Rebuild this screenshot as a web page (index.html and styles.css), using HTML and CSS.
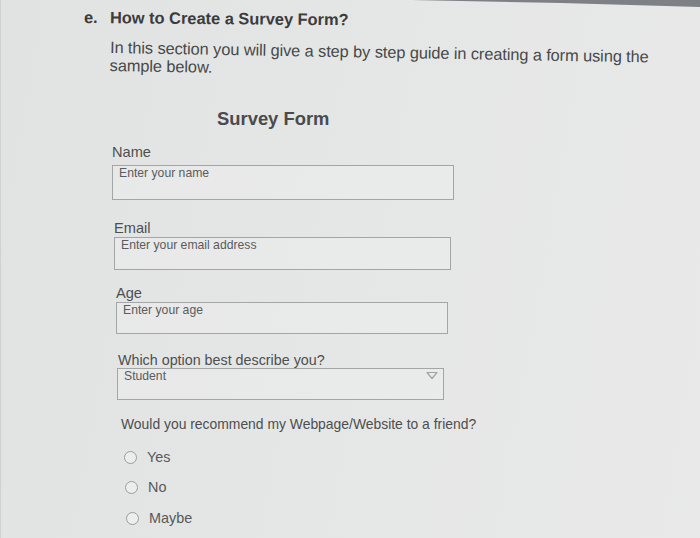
FILE: index.html
```html
<!DOCTYPE html>
<html>
<head>
<meta charset="utf-8">
<link rel="stylesheet" href="styles.css">
</head>
<body>
<div class="page">
  <div class="edge"></div>
  <h1 class="title"><span class="num">e.</span>How to Create a Survey Form?</h1>
  <p class="intro">In this section you will give a step by step guide in creating a form using the sample below.</p>
  <h2 class="form-title">Survey Form</h2>
  <form class="form">
    <div class="field f-name">
      <label class="label">Name</label>
      <div class="input in-name">Enter your name</div>
    </div>
    <div class="field f-email">
      <label class="label">Email</label>
      <div class="input in-email">Enter your email address</div>
    </div>
    <div class="field f-age">
      <label class="label">Age</label>
      <div class="input in-age">Enter your age</div>
    </div>
    <div class="field f-opt">
      <label class="label">Which option best describe you?</label>
      <div class="input select">Student
        <svg class="arrow" width="12" height="9" viewBox="0 0 12 9"><path d="M1 1.5 L11 1.5 L6 7.5 Z" fill="none" stroke="#a0a3a6" stroke-width="1.2" stroke-linejoin="round"/></svg>
      </div>
    </div>
    <div class="question">Would you recommend my Webpage/Website to a friend?</div>
    <div class="radio r-yes"><span class="dot"></span>Yes</div>
    <div class="radio r-no"><span class="dot"></span>No</div>
    <div class="radio r-maybe"><span class="dot"></span>Maybe</div>
  </form>
</div>
</body>
</html>
```
FILE: styles.css
```css
html, body {
  margin: 0;
  padding: 0;
}
body {
  width: 700px;
  height: 538px;
  overflow: hidden;
  background: linear-gradient(100deg, #e1e3e2 0%, #e5e7e6 50%, #e8e9e8 100%);
  font-family: "Liberation Sans", Arial, sans-serif;
}
.page {
  position: relative;
  height: 538px;
  border-left: 1px solid #cfd1d1;
  box-sizing: border-box;
}
.edge {
  position: absolute;
  top: 0;
  left: 0;
  width: 700px;
  height: 8px;
  background: #7d8185;
  clip-path: polygon(410px 0, 700px 0, 700px 7px, 560px 3px);
}
.title {
  margin: 0;
  padding: 8px 0 0 83px;
  font-size: 16.4px;
  line-height: 19px;
  font-weight: bold;
  color: #3b3c3d;
  transform: rotate(0.5deg);
  transform-origin: 83px 50%;
}
.num {
  display: inline-block;
  width: 26px;
}
.intro {
  margin: 11px 0 0 109px;
  width: 545px;
  font-size: 16.4px;
  line-height: 18px;
  color: #47494a;
  letter-spacing: -0.1px;
  transform: rotate(1deg);
  transform-origin: 0 30%;
}
.form-title {
  margin: 35px 0 0 216px;
  font-size: 18.4px;
  line-height: 20px;
  font-weight: bold;
  color: #4a4b4c;
}
.form {
  display: flex;
  flex-direction: column;
}
.field {
  display: flex;
  flex-direction: column;
}
.label {
  font-size: 14.6px;
  line-height: 16px;
  color: #4d4f50;
}
.input {
  box-sizing: border-box;
  border: 1.5px solid #a3a6a7;
  font-size: 12.2px;
  line-height: 14px;
  color: #5a5c5d;
  padding: 0 0 0 6px;
  background: rgba(240, 241, 241, 0.35);
}
.f-name { margin: 15px 0 0 111px; }
.f-name .label { margin-bottom: 5px; }
.in-name { width: 342px; height: 35px; }
.f-email { margin: 20px 0 0 113px; }
.f-email .label { margin-bottom: 1px; }
.in-email { width: 337px; height: 33px; }
.f-age { margin: 16px 0 0 115px; }
.f-age .label { margin-bottom: 1px; line-height: 15px; }
.in-age { width: 332px; height: 32px; }
.f-opt { margin: 18px 0 0 117px; }
.f-opt .label { margin-bottom: 0; font-size: 14.3px; }
.select {
  position: relative;
  width: 327px;
  height: 32px;
  margin-left: -1px;
}
.arrow {
  position: absolute;
  right: 5px;
  top: 2px;
}
.question {
  margin: 16px 0 0 120px;
  font-size: 13.9px;
  line-height: 16px;
  color: #4c4e4f;
}
.radio {
  display: flex;
  align-items: center;
  gap: 10px;
  font-size: 14.4px;
  line-height: 16px;
  color: #58595a;
}
.dot {
  display: inline-block;
  width: 13px;
  height: 13px;
  border: 1.5px solid #9a9d9f;
  border-radius: 50%;
  box-sizing: border-box;
  background: #eceded;
}
.r-yes { margin: 17px 0 0 123px; }
.r-no { margin: 14px 0 0 124px; }
.r-maybe { margin: 15px 0 0 125px; }
```
